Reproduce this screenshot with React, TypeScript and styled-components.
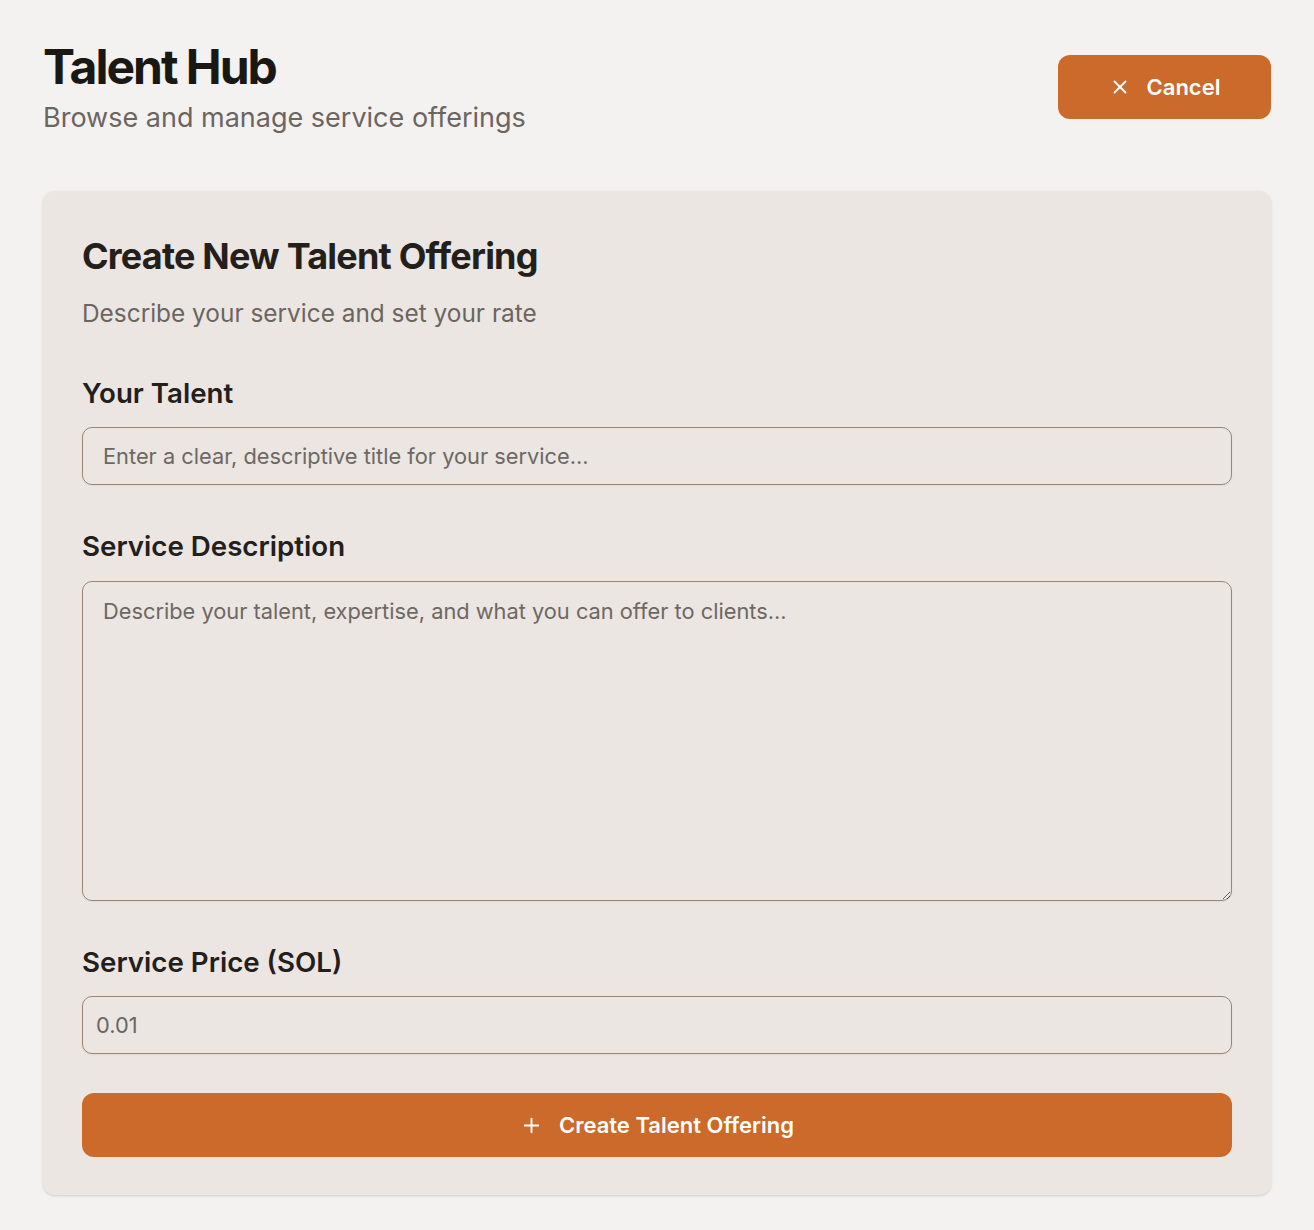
import React from "react";
import styled, { createGlobalStyle } from "styled-components";

const Global = createGlobalStyle`
  html, body { margin: 0; padding: 0; background: #f4f2f0; }
  body { font-family: Inter, "Noto Sans", sans-serif; color: #1c1a17; }
  * { box-sizing: border-box; }
`;

const Page = styled.div`
  padding: 38px 43px 34px 43px;
  display: flex;
  flex-direction: column;
  gap: 53px;
`;

const Header = styled.header`
  display: flex;
  justify-content: space-between;
  align-items: flex-start;
`;

const TitleBlock = styled.div`
  display: flex;
  flex-direction: column;
`;

const Title = styled.h1`
  margin: 0;
  font-size: 48px;
  font-weight: 700;
  letter-spacing: -2px;
  line-height: 58px;
  color: #1a1815;
`;

const Subtitle = styled.p`
  margin: 2px 0 0 0;
  font-size: 27px;
  line-height: 40px;
  color: #6b655f;
`;

const Button = styled.button<{ $full?: boolean }>`
  display: flex;
  align-items: center;
  justify-content: center;
  gap: 16px;
  height: 64px;
  width: ${(p) => (p.$full ? "100%" : "213px")};
  margin-top: ${(p) => (p.$full ? "0" : "17px")};
  border: none;
  border-radius: 12px;
  background: #cb6a2a;
  color: #fff;
  font-family: Inter, "Noto Sans", sans-serif;
  font-size: 22px;
  font-weight: 600;
  cursor: pointer;
`;

const Card = styled.section`
  background: #ebe6e2;
  border-radius: 12px;
  box-shadow: 0 1px 3px rgba(60, 40, 20, 0.12), 0 1px 2px rgba(60, 40, 20, 0.06);
  padding: 41px 39px 38px 39px;
  display: flex;
  flex-direction: column;
`;

const CardTitle = styled.h2`
  margin: 0;
  font-size: 36px;
  font-weight: 700;
  letter-spacing: -0.8px;
  line-height: 48px;
  color: #23201c;
`;

const CardSubtitle = styled.p`
  margin: 15px 0 0 0;
  font-size: 24.4px;
  line-height: 36px;
  color: #6b655f;
`;

const Field = styled.div`
  display: flex;
  flex-direction: column;
  gap: 16px;
  margin-top: 43px;
  &:first-of-type { margin-top: 44px; }
`;

const Label = styled.label`
  font-size: 27.7px;
  font-weight: 600;
  line-height: 36px;
  color: #23201c;
`;

const inputBase = `
  width: 100%;
  background: #ebe6e2;
  border: 1px solid #9c8472;
  border-radius: 10px;
  font-family: Inter, "Noto Sans", sans-serif;
  font-size: 21.8px;
  color: #6b655f;
  outline: none;
  box-shadow: 0 1px 2px rgba(0,0,0,0.05);
  &::placeholder { color: #6e6862; }
`;

const TextInput = styled.input<{ $pad?: number }>`
  ${inputBase}
  height: 58px;
  padding: 0 ${(p) => p.$pad ?? 20}px;
`;

const TextArea = styled.textarea`
  ${inputBase}
  height: 320px;
  margin-top: 1px;
  padding: 14px 20px;
  resize: vertical;
  line-height: 30px;
  display: block;
`;

const ButtonRow = styled.div`
  margin-top: 39px;
`;

const XIcon = () => (
  <svg width="22" height="22" viewBox="0 0 24 24" fill="none" stroke="currentColor" strokeWidth="2" strokeLinecap="round">
    <path d="M18 6 6 18" />
    <path d="m6 6 12 12" />
  </svg>
);

const PlusIcon = () => (
  <svg width="23" height="23" viewBox="0 0 24 24" fill="none" stroke="currentColor" strokeWidth="2" strokeLinecap="round">
    <path d="M5 12h14" />
    <path d="M12 5v14" />
  </svg>
);

export default function App() {
  return (
    <>
      <Global />
      <Page>
        <Header>
          <TitleBlock>
            <Title>Talent Hub</Title>
            <Subtitle>Browse and manage service offerings</Subtitle>
          </TitleBlock>
          <Button>
            <XIcon />
            Cancel
          </Button>
        </Header>
        <Card>
          <CardTitle>Create New Talent Offering</CardTitle>
          <CardSubtitle>Describe your service and set your rate</CardSubtitle>
          <Field>
            <Label>Your Talent</Label>
            <TextInput placeholder="Enter a clear, descriptive title for your service..." />
          </Field>
          <Field>
            <Label>Service Description</Label>
            <TextArea placeholder="Describe your talent, expertise, and what you can offer to clients..." />
          </Field>
          <Field>
            <Label>Service Price (SOL)</Label>
            <TextInput type="number" defaultValue="0.01" $pad={13} />
          </Field>
          <ButtonRow>
            <Button $full>
              <PlusIcon />
              Create Talent Offering
            </Button>
          </ButtonRow>
        </Card>
      </Page>
    </>
  );
}
